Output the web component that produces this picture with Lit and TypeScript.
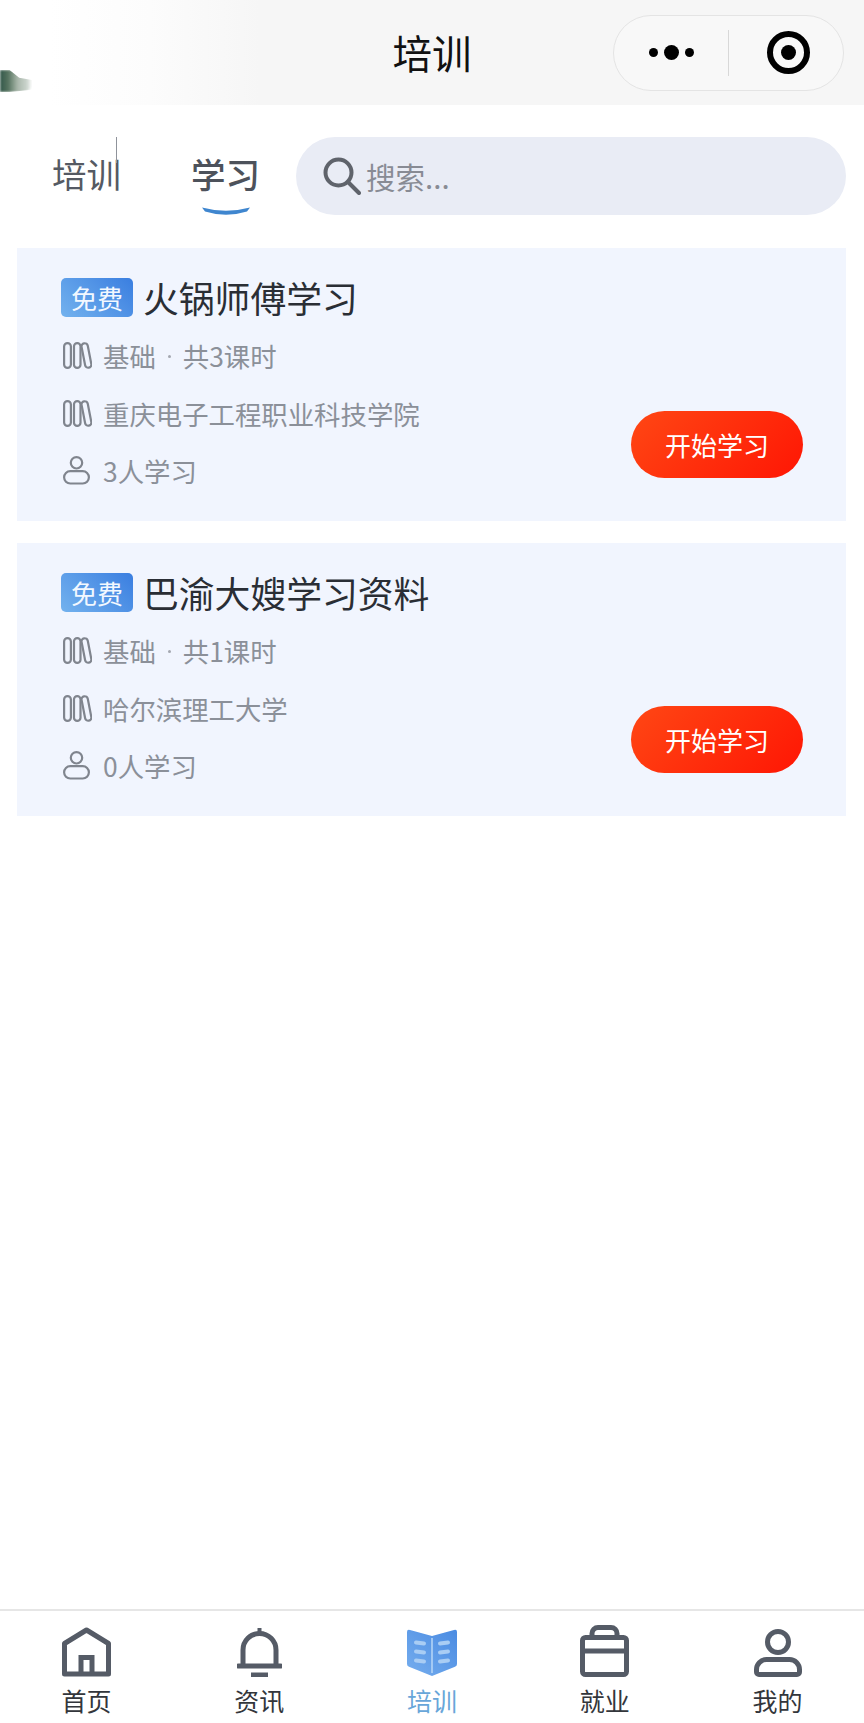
import { LitElement, html, css, svg } from 'lit';
import { customElement } from 'lit/decorators.js';

type Course = {
  name: string;
  level: string;
  lessons: string;
  school: string;
  learners: string;
};

const COURSES: Course[] = [
  { name: '火锅师傅学习', level: '基础', lessons: '共3课时', school: '重庆电子工程职业科技学院', learners: '3人学习' },
  { name: '巴渝大嫂学习资料', level: '基础', lessons: '共1课时', school: '哈尔滨理工大学', learners: '0人学习' },
];

const booksIcon = svg`
  <svg class="row-icon" width="29" height="27" viewBox="0 0 29 27" fill="none" stroke="#80858e" stroke-width="2.200">
    <rect x="1.100" y="1.100" width="6.800" height="24.800" rx="3.400" />
    <rect x="11" y="1.100" width="6.500" height="24.800" rx="3.200" />
    <rect x="20.300" y="1.100" width="6.300" height="24.800" rx="3.100" transform="rotate(-11 23.400 13.500)" />
  </svg>
`;

const personIcon = svg`
  <svg class="row-icon" width="29" height="29" viewBox="0 0 29 29" fill="none" stroke="#80858e" stroke-width="2.200">
    <circle cx="13.500" cy="6.800" r="5.700" />
    <rect x="1.100" y="15.100" width="24.800" height="12.400" rx="6.200" />
  </svg>
`;

const TABS = [
  {
    label: '首页',
    icon: svg`<svg width="49" height="50" viewBox="0 0 49 50" fill="none" stroke="#555b66" stroke-width="5">
      <path d="M2.500 47V16.500L24.500 3L46.500 16.500V47Z" stroke-linejoin="round" />
      <path d="M19 47V30.500H30V47" />
    </svg>`,
  },
  {
    label: '资讯',
    icon: svg`<svg width="45" height="50" viewBox="0 0 45 50" fill="none" stroke="#555b66" stroke-width="5">
      <path d="M20.500 1h4v6h-4z" fill="#555b66" stroke="none" />
      <path d="M6 38V23a16.500 16.500 0 0 1 33 0V38" />
      <path d="M1.500 39H43.500" stroke-linecap="round" />
      <path d="M14 48H31" />
    </svg>`,
  },
  {
    label: '培训',
    active: true,
    icon: svg`<svg width="50" height="48" viewBox="0 0 50 48">
      <defs>
        <linearGradient id="book" x1="0" y1="1" x2="1" y2="0">
          <stop offset="0" stop-color="#76aeee" />
          <stop offset="1" stop-color="#4a8be2" />
        </linearGradient>
      </defs>
      <path d="M0 3Q0 0 3 1L25 7L47 1Q50 0 50 3V35Q50 37 48 37.800L25 47L2 37.800Q0 37 0 35Z" fill="url(#book)" />
      <path d="M25 9V44" stroke="#b9d7f7" stroke-width="1.500" />
      <g stroke="#a9cdf4" stroke-width="4" stroke-linecap="round">
        <path d="M9 13.500L17 14.500M9 22.500L17 23.500M9 31.500L17 32.500" />
        <path d="M33 14.500L41 13.500M33 23.500L41 22.500M33 32.500L41 31.500" />
      </g>
    </svg>`,
  },
  {
    label: '就业',
    icon: svg`<svg width="49" height="52" viewBox="0 0 49 52" fill="none" stroke="#555b66" stroke-width="5">
      <rect x="2.500" y="12.500" width="44" height="37" rx="3" />
      <path d="M2.500 26H46.500" />
      <path d="M12 12V8.500a6 6 0 0 1 6-6H31a6 6 0 0 1 6 6V12" />
    </svg>`,
  },
  {
    label: '我的',
    icon: svg`<svg width="48" height="48" viewBox="0 0 48 48" fill="none" stroke="#555b66" stroke-width="5">
      <circle cx="24" cy="13" r="10.500" />
      <path d="M2.500 43V40.500a10 10 0 0 1 10-10H35.500a10 10 0 0 1 10 10V43a2.500 2.500 0 0 1-2.500 2.500H5a2.500 2.500 0 0 1-2.500-2.500Z" />
    </svg>`,
  },
];

@customElement('app-root')
export class AppRoot extends LitElement {
  static override styles = css`
    :host {
      display: block;
      font-family: 'Noto Sans CJK SC', 'Noto Sans', sans-serif;
    }

    .page {
      display: flex;
      flex-direction: column;
      height: 1723px;
      background: #fff;
      overflow: hidden;
    }

    /* title bar */
    .bar {
      position: relative;
      display: grid;
      grid-template-columns: 1fr auto 1fr;
      align-items: center;
      height: 105px;
      flex: none;
      background: linear-gradient(90deg, #fff 0, #fff 50px, #fcfcfc 150px, #f6f6f6 260px);
    }
    .smudge {
      position: absolute;
      left: 0;
      top: 70px;
      width: 32px;
      height: 22px;
      border-radius: 0 40% 30% 0;
      clip-path: polygon(0 0, 30% 0, 60% 35%, 100% 45%, 100% 90%, 30% 100%, 0 100%);
      background: linear-gradient(90deg, #33584a 0, #55735f 25%, #a9b7ab 55%, #cdd6cf 85%, rgba(255, 255, 255, 0) 100%);
      filter: blur(1px);
    }
    .bar-title {
      grid-column: 2;
      font-size: 39.500px;
      line-height: 50px;
      color: #111;
      margin-top: -2px;
    }
    .capsule {
      grid-column: 3;
      justify-self: end;
      display: flex;
      align-items: center;
      box-sizing: border-box;
      width: 231px;
      height: 76px;
      margin-right: 20px;
      border: 1.500px solid #e4e4e4;
      border-radius: 38px;
      background: #f8f8f8;
    }
    .capsule-side {
      display: flex;
      align-items: center;
      justify-content: center;
    }
    .capsule-more {
      width: 114px;
      gap: 6px;
    }
    .capsule-more i {
      width: 9px;
      height: 9px;
      border-radius: 50%;
      background: #000;
    }
    .capsule-more i:nth-child(2) {
      width: 15px;
      height: 15px;
    }
    .capsule-rule {
      width: 1px;
      height: 46px;
      background: #d8d8d8;
    }
    .capsule-target {
      flex: 1;
      padding-left: 4px;
    }
    .capsule-target b {
      box-sizing: border-box;
      display: flex;
      align-items: center;
      justify-content: center;
      width: 43px;
      height: 43px;
      border: 6px solid #000;
      border-radius: 50%;
    }
    .capsule-target b::after {
      content: '';
      width: 15px;
      height: 15px;
      border-radius: 50%;
      background: #000;
    }

    /* tabs + search */
    .filters {
      display: flex;
      align-items: center;
      flex: none;
      height: 78px;
      margin: 32px 18px 33px 0;
      padding-left: 52px;
    }
    .tab {
      position: relative;
      margin-bottom: 6px;
      font-size: 34.500px;
      line-height: 46px;
      color: #555a63;
      white-space: nowrap;
    }
    .tab + .tab {
      margin-left: 70px;
    }
    .tab.first::after {
      content: '';
      position: absolute;
      right: 4px;
      top: -13px;
      width: 1.500px;
      height: 26px;
      background: #8f939b;
    }
    .tab.on {
      color: #4d525b;
      font-weight: 500;
    }
    .tab-line {
      position: absolute;
      left: 11px;
      top: 56px;
    }
    .search {
      flex: 1;
      display: flex;
      align-items: center;
      gap: 5px;
      height: 78px;
      margin-left: 36px;
      padding-left: 27px;
      border-radius: 39px;
      background: #e9ecf5;
      font-size: 29.500px;
      color: #888b94;
    }

    /* course cards */
    .card {
      display: flex;
      justify-content: space-between;
      box-sizing: border-box;
      height: 273px;
      margin: 0 18px 22px 17px;
      padding: 30px 43px 43px 44px;
      background: #f1f5fe;
    }
    .card-head {
      display: flex;
      align-items: center;
      gap: 10px;
      height: 39px;
      margin-bottom: 10px;
    }
    .badge {
      width: 72px;
      height: 39px;
      border-radius: 5px;
      background: linear-gradient(45deg, #73b2ee, #3a7ee0);
      color: #f2f8ff;
      font-size: 26px;
      line-height: 39px;
      text-align: center;
    }
    .card-title {
      margin-top: -2px;
      font-size: 35.800px;
      line-height: 46px;
      color: #2a2e35;
      white-space: nowrap;
    }
    .row {
      display: flex;
      align-items: center;
      gap: 11px;
      height: 57.500px;
      padding-left: 2px;
      font-size: 26.400px;
      color: #8b9099;
      white-space: nowrap;
    }
    .row-icon {
      flex: none;
    }
    .dot {
      width: 3px;
      height: 3px;
      margin: 2px 1px 0;
      border-radius: 50%;
      background: #a4a8b0;
    }
    .start {
      align-self: flex-end;
      width: 172px;
      height: 67px;
      border-radius: 34px;
      background: linear-gradient(135deg, #ff4714, #ff1604);
      color: #fff;
      font-size: 26px;
      line-height: 67px;
      text-align: center;
    }

    /* bottom tabbar */
    .nav {
      display: grid;
      grid-template-columns: repeat(5, 1fr);
      flex: none;
      box-sizing: border-box;
      height: 114px;
      margin-top: auto;
      border-top: 2px solid #e6e6e6;
    }
    .nav-item {
      display: flex;
      flex-direction: column;
      align-items: center;
      font-size: 25px;
      line-height: 34px;
      color: #33363b;
    }
    .nav-icon {
      display: flex;
      align-items: flex-end;
      height: 66px;
      margin-bottom: 6px;
    }
    .nav-item.on {
      color: #68a6d9;
    }
  `;

  renderCourse(c: Course) {
    return html`
      <div class="card">
        <div>
          <div class="card-head">
            <span class="badge">免费</span>
            <span class="card-title">${c.name}</span>
          </div>
          <div class="row">${booksIcon}<span>${c.level}</span><span class="dot"></span><span>${c.lessons}</span></div>
          <div class="row">${booksIcon}<span>${c.school}</span></div>
          <div class="row">${personIcon}<span>${c.learners}</span></div>
        </div>
        <div class="start">开始学习</div>
      </div>
    `;
  }

  override render() {
    return html`
      <div class="page">
        <header class="bar">
          <div class="smudge"></div>
          <div class="bar-title">培训</div>
          <div class="capsule">
            <div class="capsule-side capsule-more"><i></i><i></i><i></i></div>
            <div class="capsule-rule"></div>
            <div class="capsule-side capsule-target"><b></b></div>
          </div>
        </header>

        <div class="filters">
          <div class="tab first">培训</div>
          <div class="tab on">
            学习
            <svg class="tab-line" width="48" height="10" viewBox="0 0 48 10">
              <path d="M0 1.500Q24 8 48 1.500L45 5.500Q24 12 3 5.500Z" fill="#3f86cf" />
            </svg>
          </div>
          <div class="search">
            <svg width="38" height="38" viewBox="0 0 38 38" fill="none" stroke="#5f636b" stroke-width="4">
              <circle cx="15.500" cy="15.500" r="13" />
              <path d="M25 25L36 36" stroke-linecap="round" />
            </svg>
            <span>搜索...</span>
          </div>
        </div>

        ${COURSES.map((c) => this.renderCourse(c))}

        <nav class="nav">
          ${TABS.map(
            (t) => html`
              <div class="nav-item ${t.active ? 'on' : ''}">
                <div class="nav-icon">${t.icon}</div>
                <span>${t.label}</span>
              </div>
            `
          )}
        </nav>
      </div>
    `;
  }
}

export default AppRoot;
